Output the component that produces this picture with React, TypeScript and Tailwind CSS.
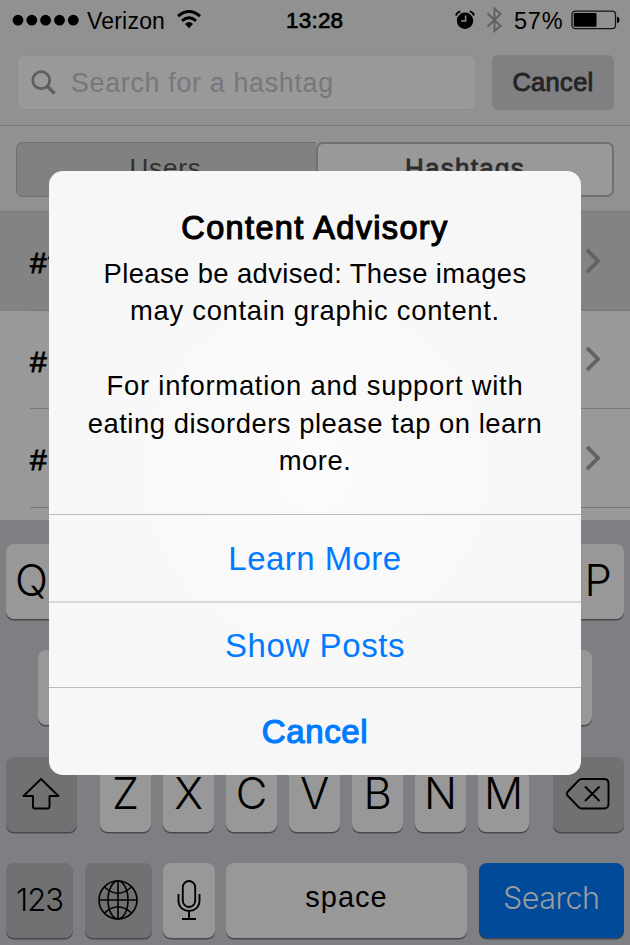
import type { ReactNode } from 'react';

const KEY = 'flex items-center justify-center rounded-[8px] h-[75px] shrink-0 shadow-[0_1.5px_0_#47484a]';
const LIGHT = 'bg-[#989898]';
const DARK = 'bg-[#707173]';

function Key({ className = '', children }: { className?: string; children?: ReactNode }) {
  return <div className={`${KEY} ${className}`}>{children}</div>;
}

function LetterKey({ children }: { children?: ReactNode }) {
  return (
    <Key className={`${LIGHT} w-[51.25px] pb-[2px]`}>
      <span className="font-['Inter',sans-serif] font-light text-[43.5px] leading-[50px]">{children}</span>
    </Key>
  );
}

function StatusBar() {
  return (
    <div className="flex h-[40px] items-center">
      <svg className="ml-[12px] w-[68px] h-[12px] shrink-0" viewBox="0 0 68 12">
        {[6, 19.8, 33.6, 47.5, 61.3].map((x) => (
          <circle key={x} cx={x} cy="6.2" r="5.4" />
        ))}
      </svg>
      <span className="ml-[7px] w-[84px] text-[23px] leading-[40px] tracking-[0.2px] pt-px">Verizon</span>
      <svg className="ml-[5px] w-[26px] h-[20px] shrink-0" viewBox="0 0 26 20">
        <path d="M2 6.2Q13-3.2 24 6.2M6 10.8q7-6 14 0" fill="none" stroke="#000" strokeWidth="3" />
        <path d="M9 14q4-3.8 8 0l-4 4.2z" />
      </svg>
      <span className="ml-[84px] w-[60px] text-[22.5px] leading-[40px] tracking-[0.2px] pt-px [-webkit-text-stroke:0.7px_#000]">13:28</span>
      <svg className="ml-[109px] w-[20px] h-[20px] shrink-0" viewBox="0 0 20 20">
        <circle cx="10" cy="10.7" r="8.2" />
        <path d="M1 5.5Q1.8 2.2 5.2 1.4M14.8 1.4Q18.2 2.2 19 5.5" stroke="#000" strokeWidth="1.8" fill="none" />
        <path d="M10.6 5.5v5.6H6.2" stroke="#929292" strokeWidth="1.5" fill="none" />
      </svg>
      <svg className="ml-[11px] w-[17px] h-[28px] shrink-0" viewBox="0 0 17 28">
        <path d="M1.5 7.2l13 12.5-6 5.5V2.5l6 5.5-13 12.7" stroke="#606060" strokeWidth="1.9" fill="none" />
      </svg>
      <span className="ml-[11px] w-[54px] text-[23.5px] leading-[40px] tracking-[0.8px] pt-px">57%</span>
      <svg className="ml-[3px] w-[49px] h-[20px] shrink-0" viewBox="0 0 49 20">
        <rect x="1" y="1.2" width="43.5" height="17.4" rx="3.3" fill="none" stroke="#161616" strokeWidth="1.3" />
        <rect x="2.8" y="3" width="22.7" height="13.8" rx="1" />
        <path d="M46 6.7c3.3.4 3.3 6 0 6.4z" />
      </svg>
    </div>
  );
}

function Header() {
  return (
    <div className="h-[126px] border-b border-[#7a7a7b] bg-[#919191]">
      <StatusBar />
      <div className="flex pl-[17px] pt-[15px]">
        <div className="flex h-[55px] w-[459px] items-center rounded-[6px] border border-[#8e8e8e] bg-[#999999]">
          <svg className="ml-[12px] w-[27px] h-[27px] shrink-0" viewBox="0 0 27 27">
            <circle cx="11.2" cy="11.2" r="8.5" fill="none" stroke="#5e5f5f" strokeWidth="2.8" />
            <path d="M17 17l7.5 7.5" stroke="#5e5f5f" strokeWidth="3.2" />
          </svg>
          <span className="ml-[14px] whitespace-nowrap text-[26.8px] leading-[50px] tracking-[0.7px] text-[#77777b]">Search for a hashtag</span>
        </div>
        <div className="ml-[16px] flex h-[55px] w-[122px] items-center justify-center rounded-[6px] bg-[#808083] text-[25.5px] tracking-[0.3px] text-[#242425] [-webkit-text-stroke:0.9px_#242425]">
          Cancel
        </div>
      </div>
    </div>
  );
}

function Segments() {
  return (
    <div className="flex h-[85px] bg-[#919191] pl-[16px] pt-[16px]">
      <div className="flex h-[55px] w-[300px] justify-center rounded-l-[7px] border border-r-0 border-[#6f6f70] bg-[#818181] pt-[8px] pr-[2px] text-[26px] leading-[34px] tracking-[0.8px] text-[#303030]">
        Users
      </div>
      <div className="flex h-[55px] w-[298px] justify-center rounded-[7px] border-[2px] border-[#707072] bg-[#999999] pt-[7px] text-[26px] leading-[34px] tracking-[1.3px] text-[#2c2c2d] [-webkit-text-stroke:0.8px_#2c2c2d]">
        Hashtags
      </div>
    </div>
  );
}

function Row({ label, active = false }: { label: string; active?: boolean }) {
  return (
    <div className={`h-[98.5px] pl-[30px] ${active ? 'bg-[#838383]' : 'bg-[#999999]'}`}>
      <div className="flex h-full items-center justify-between border-b border-[#79797a] pr-[28px]">
        <span className="text-[30px] tracking-[1.2px] pt-[4px] [-webkit-text-stroke:0.9px_#000]">{label}</span>
        <svg className="w-[18px] h-[28px]" viewBox="0 0 18 28">
          <path d="M3 2.8L14 14 3 25.2" fill="none" stroke="#606264" strokeWidth="3.8" />
        </svg>
      </div>
    </div>
  );
}

function Keyboard() {
  return (
    <div className="flex grow flex-col bg-[#7d7f82] pt-[24px]">
      <div className="flex gap-[11.7px] pl-[6px]">
        <LetterKey>Q</LetterKey>
        {[1, 2, 3, 4, 5, 6, 7, 8].map((n) => <LetterKey key={n} />)}
        <LetterKey>P</LetterKey>
      </div>
      <div className="mt-[31.5px] flex gap-[11.7px] pl-[37.5px]">
        {[1, 2, 3, 4, 5, 6, 7, 8, 9].map((n) => <LetterKey key={n} />)}
      </div>
      <div className="mt-[31.5px] flex pl-[6px]">
        <Key className={`${DARK} w-[71px] pr-[2px]`}>
          <svg className="w-[40px] h-[36px]" viewBox="0 0 40 36">
            <path d="M20 3L37.5 20H28.5V30.5Q28.5 32.5 26.5 32.5H14Q12 32.5 12 30.5V20H2.5z" fill="none" stroke="#000" strokeWidth="1.9" strokeLinejoin="round" />
          </svg>
        </Key>
        <div className="ml-[23px] mr-[23.5px] flex gap-[11.75px]">
          {'ZXCVBNM'.split('').map((c) => <LetterKey key={c}>{c}</LetterKey>)}
        </div>
        <Key className={`${DARK} w-[71px] pr-px`}>
          <svg className="w-[46px] h-[34px]" viewBox="0 0 46 34">
            <path d="M17 2H39Q43.5 2 43.5 6.5V27Q43.5 31.5 39 31.5H17Q15 31.5 13.5 30L2.5 18.5Q1 16.75 2.5 15L13.5 3.5Q15 2 17 2z" fill="none" stroke="#000" strokeWidth="1.9" />
            <path d="M20 9.5L34.5 24M34.5 9.5L20 24" stroke="#000" strokeWidth="1.9" />
          </svg>
        </Key>
      </div>
      <div className="mt-[31px] flex pl-[6px]">
        <Key className={`${DARK} w-[67px]`}>
          <span className="font-['Inter',sans-serif] font-light text-[31px] tracking-[-1px]">123</span>
        </Key>
        <Key className={`${DARK} ml-[12px] w-[66.5px]`}>
          <svg className="w-[42px] h-[42px]" viewBox="0 0 42 42" fill="none" stroke="#000" strokeWidth="1.6">
            <circle cx="21" cy="21" r="19" />
            <ellipse cx="21" cy="21" rx="10" ry="19" />
            <path d="M21 2v38M2 21h38M7.5 8Q21 20.5 34.5 8M7.5 34Q21 21.5 34.5 34" />
          </svg>
        </Key>
        <Key className={`${LIGHT} ml-[11.5px] w-[51.5px]`}>
          <svg className="w-[26px] h-[42px]" viewBox="0 0 26 42" fill="none" stroke="#000" strokeWidth="1.9">
            <rect x="6.8" y="2" width="12.4" height="26" rx="6.2" />
            <path d="M2.5 15v6.5c0 14 21 14 21 0V15M13 32v8M6 40h14" />
          </svg>
        </Key>
        <Key className={`${LIGHT} ml-[11.5px] w-[241px] pb-[5px] text-[29px] tracking-[1px]`}>space</Key>
        <Key className="ml-[11.5px] w-[145.5px] bg-[#004a99] pb-[4px] font-['Inter',sans-serif] font-light text-[30.5px] tracking-[-0.5px] text-[#999ca0]">Search</Key>
      </div>
    </div>
  );
}

function Advisory() {
  return (
    <div className="absolute left-[49px] top-[170.5px] flex h-[604px] w-[532px] flex-col rounded-[14px] bg-[#f7f7f7] bg-[radial-gradient(circle_at_50%_50%,#fbfbfb,#f7f7f7_60%)] text-center whitespace-nowrap">
      <div className="h-[343px] pt-[37px]">
        <h1 className="text-[32.5px] leading-[40px] tracking-[1.35px] [-webkit-text-stroke:1.2px_#000]">Content Advisory</h1>
        <p className="mt-[7.5px] text-[27.4px] leading-[37.4px]">
          <span className="tracking-[0.4px]">Please be advised: These images</span><br />
          <span className="tracking-[0.7px]">may contain graphic content.</span><br />
          <br />
          <span className="tracking-[0.75px]">For information and support with</span><br />
          <span className="tracking-[0.53px]">eating disorders please tap on learn</span><br />
          <span className="tracking-[0.5px]">more.</span>
        </p>
      </div>
      <div className="flex h-[87px] items-center justify-center border-t border-[#bcbcbc] pt-[2px] text-[33px] tracking-[0.45px] text-[#007aff]">Learn More</div>
      <div className="flex h-[86.5px] items-center justify-center border-t-[2px] border-[#d8d8d8] pt-px text-[33px] tracking-[0.6px] text-[#007aff]">Show Posts</div>
      <div className="flex grow items-center justify-center border-t border-[#bcbcbc] pt-px text-[33px] tracking-[0.6px] text-[#007aff] [-webkit-text-stroke:1.2px_#007aff]">Cancel</div>
    </div>
  );
}

export default function App() {
  return (
    <div className="relative flex h-[945px] w-[630px] flex-col overflow-hidden bg-[#999999] font-['Liberation_Sans',sans-serif] text-black">
      <Header />
      <Segments />
      <div className="h-[308.5px] shrink-0 border-t border-[#7d7d7d]">
        <Row label="#t" active />
        <Row label="#" />
        <Row label="#" />
      </div>
      <Keyboard />
      <Advisory />
    </div>
  );
}
